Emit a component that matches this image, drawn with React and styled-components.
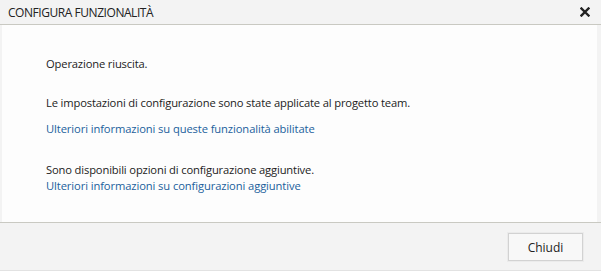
import React from "react";
import styled, { createGlobalStyle } from "styled-components";

const GlobalStyle = createGlobalStyle`
  html, body {
    margin: 0;
    padding: 0;
    background: #f3f3f3;
  }
  body {
    font-family: "Segoe UI", "Open Sans", "Noto Sans", sans-serif;
    font-size: 12px;
    color: #222;
  }
`;

const Dialog = styled.div`
  width: 601px;
  height: 271px;
  display: flex;
  flex-direction: column;
  background: #f3f3f3;
  box-sizing: border-box;
  border-bottom: 1px solid #e2e2e2;
`;

const TitleBar = styled.div`
  height: 24px;
  display: flex;
  align-items: center;
  justify-content: space-between;
  padding: 0 10px 0 8px;
  border-bottom: 1px solid #c9c9c2;
`;

const Title = styled.span`
  font-size: 12px;
  color: #222;
  letter-spacing: -0.45px;
`;

const CloseButton = styled.button`
  border: none;
  background: none;
  padding: 0;
  width: 12px;
  height: 12px;
  display: flex;
  align-items: center;
  justify-content: center;
  cursor: pointer;
`;

const Body = styled.div`
  height: 197px;
  margin: 0 4px 0 2px;
  background: #fdfdfd;
  box-sizing: border-box;
  padding: 31px 0 0 44px;
  display: flex;
  flex-direction: column;
`;

const Line = styled.p`
  margin: 0 0 ${(p) => p.gap || 0}px;
  line-height: 16px;
  font-size: 11.2px;
  letter-spacing: -0.15px;
  color: #222;
`;

const Link = styled.a`
  display: block;
  margin-bottom: ${(p) => p.gap || 0}px;
  line-height: 16px;
  font-size: 11.2px;
  letter-spacing: -0.1px;
  color: #1b5f9c;
  text-decoration: none;
  cursor: pointer;
`;

const Footer = styled.div`
  flex: 1;
  display: flex;
  align-items: flex-start;
  justify-content: flex-end;
  border-top: 1px solid #c9c9c2;
  padding: 10px 18px 0 0;
`;

const Button = styled.button`
  width: 75px;
  height: 28px;
  background: #f8f8f8;
  border: 1px solid #d2d2d2;
  outline: 1px solid #ebebeb;
  font-family: inherit;
  font-size: 12px;
  color: #222;
  cursor: pointer;
`;

export default function App() {
  return (
    <>
      <GlobalStyle />
      <Dialog>
        <TitleBar>
          <Title>CONFIGURA FUNZIONALITÀ</Title>
          <CloseButton aria-label="Chiudi">
            <svg width="10" height="10" viewBox="0 0 10 10">
              <path d="M1.5 1.5 L8.5 8.5 M8.5 1.5 L1.5 8.5" stroke="#222" strokeWidth="2.4" strokeLinecap="square" />
            </svg>
          </CloseButton>
        </TitleBar>
        <Body>
          <Line gap={23}>Operazione riuscita.</Line>
          <Line gap={10}>Le impostazioni di configurazione sono state applicate al progetto team.</Line>
          <Link gap={25}>Ulteriori informazioni su queste funzionalità abilitate</Link>
          <Line>Sono disponibili opzioni di configurazione aggiuntive.</Line>
          <Link>Ulteriori informazioni su configurazioni aggiuntive</Link>
        </Body>
        <Footer>
          <Button>Chiudi</Button>
        </Footer>
      </Dialog>
    </>
  );
}
